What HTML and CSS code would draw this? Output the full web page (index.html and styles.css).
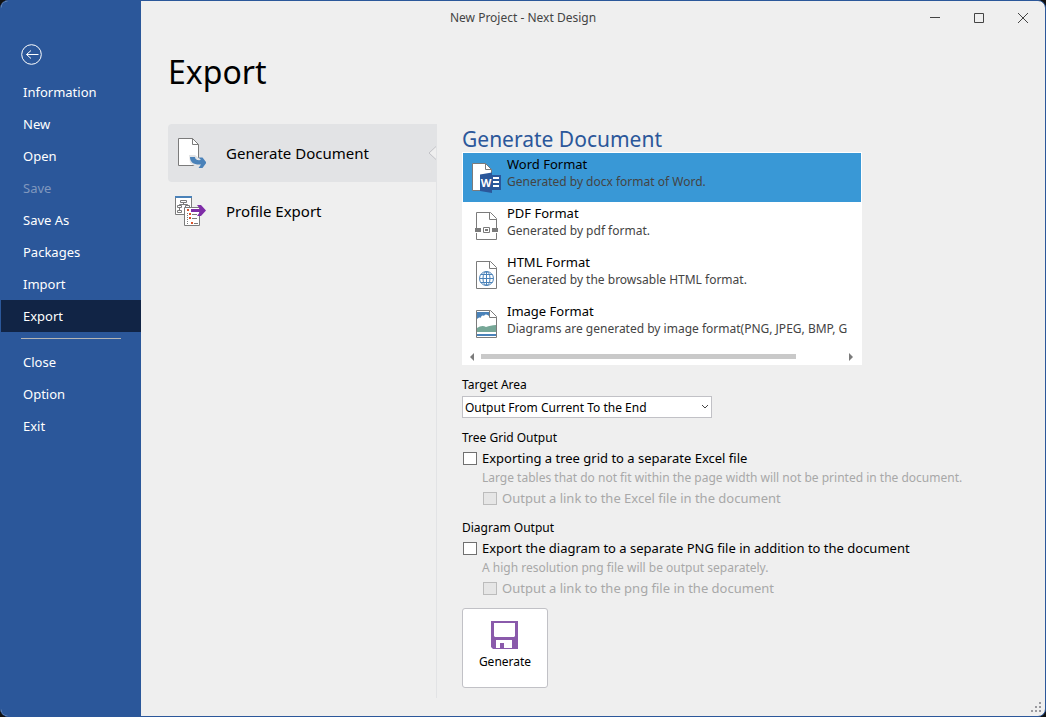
FILE: index.html
```html
<!DOCTYPE html>
<html lang="en">
<head>
    <meta charset="UTF-8">
    <meta name="viewport" content="width=device-width, initial-scale=1.0">
    <title>New Project - Next Design</title>
    <link rel="stylesheet" href="styles.css">
</head>
<body>
    <div class="window">
        <header class="titlebar">
            <span class="window-title">New Project - Next Design</span>
            <div class="window-buttons">
                <button type="button" aria-label="Minimize">
                    <svg width="12" height="12" viewBox="0 0 12 12"><path d="M1 5.5h10"/></svg>
                </button>
                <button type="button" aria-label="Maximize">
                    <svg width="12" height="12" viewBox="0 0 12 12"><path d="M1.5 1.5h9v9h-9z"/></svg>
                </button>
                <button type="button" aria-label="Close">
                    <svg width="12" height="12" viewBox="0 0 12 12"><path d="M1 1l10 10M11 1L1 11"/></svg>
                </button>
            </div>
        </header>

        <nav class="sidebar">
            <button class="back" type="button" aria-label="Back">
                <svg width="22" height="22" viewBox="0 0 22 22">
                    <circle cx="10.5" cy="10.5" r="9.8"/>
                    <path d="M5.5 10.5h12M10 6.5l-4.5 4 4.5 4"/>
                </svg>
            </button>
            <a href="#">Information</a>
            <a href="#">New</a>
            <a href="#">Open</a>
            <a class="disabled" href="#" aria-disabled="true">Save</a>
            <a href="#">Save As</a>
            <a href="#">Packages</a>
            <a href="#">Import</a>
            <a class="active" href="#">Export</a>
            <hr>
            <a href="#">Close</a>
            <a href="#">Option</a>
            <a href="#">Exit</a>
        </nav>

        <main class="page">
            <h1>Export</h1>
            <div class="columns">
                <div class="export-menu">
                    <button class="export-item selected" type="button">
                        <svg width="32" height="32" viewBox="0 0 32 32">
                            <path d="M4.5 1.5h14l6 6v21h-20z" fill="#fff" stroke="#7b7b7b"/>
                            <path d="M18.5 1.5v6h6" fill="none" stroke="#7b7b7b"/>
                            <path d="M15 18h6l5 4v8h-4l-6-4z" fill="#e2e3e5"/>
                            <path d="M16 20h5c0 2.500 2 3.500 6 3l-2.500-2.500h4l4 5-4 5.500h-4l2.500-3.500c-7 .5-11-2-11-7.500z" fill="#4a82b9"/>
                        </svg>
                        Generate Document
                        <svg class="pointer" width="8" height="14" viewBox="0 0 8 14"><path d="M8 .5L1 7l7 6.500"/></svg>
                    </button>
                    <button class="export-item" type="button">
                        <svg width="32" height="32" viewBox="0 0 32 32">
                            <path d="M1.500 1.500h16v18h-16z" fill="#fff" stroke="#7b7b7b"/>
                            <path d="M1 1h17v2H1z" fill="#4a82b9"/>
                            <path d="M6.500 5.500h6v2h-6zM3.500 10.500h4v2h-4zM11.500 10.500h4v2h-4zM3.500 15.500h4v2h-4zM9.500 7.500v2M5.500 10.500v-1h8v1M5.500 12.500v3" fill="none" stroke="#7b7b7b"/>
                            <path d="M10.500 12.500h15v18h-15z" fill="#fff" stroke="#7b7b7b"/>
                            <path d="M13 14h2v2h-2zM15 18h2v2h-2zM15 22h2v2h-2zM17 27h2v2h-2z" fill="#d9532c"/>
                            <path d="M18 19.500h5M18 23.500h5M20 28.500h4" stroke="#7b7b7b"/>
                            <path d="M13.500 18v11" stroke="#7b7b7b" stroke-dasharray="1 1"/>
                            <path d="M17 14h9l-3-4h4l5 5.500-5 5.500h-4l3-4h-9z" fill="#7f2da8"/>
                        </svg>
                        Profile Export
                    </button>
                </div>

                <section class="content">
                    <h2>Generate Document</h2>
                    <div class="format-box">
                        <ul class="formats" role="listbox" aria-label="Format">
                            <li class="selected" role="option" aria-selected="true">
                                <svg width="32" height="31" viewBox="0 0 32 31">
                                    <path d="M1.500 1.500h13l6 6v21h-19z" fill="#fff" stroke="#7b7b7b"/>
                                    <path d="M14.500 1.500v6h6" fill="none" stroke="#7b7b7b"/>
                                    <path d="M21 13h9v15h-9z" fill="#2b579a"/>
                                    <path d="M22 16h6M22 20h6M22 24h6" stroke="#fff" stroke-width="2"/>
                                    <path d="M9 12.500l12-2v20.500l-12-2z" fill="#2b579a"/>
                                    <text class="word-letter" x="15" y="25" text-anchor="middle">W</text>
                                </svg>
                                <div>
                                    <strong>Word Format</strong>
                                    <span>Generated by docx format of Word.</span>
                                </div>
                            </li>
                            <li role="option" aria-selected="false">
                                <svg width="32" height="31" viewBox="0 0 32 31">
                                    <path d="M5.500 17V1.500h14l6 6V17M5.500 22v6.500h20V22" fill="none" stroke="#7b7b7b"/>
                                    <path d="M18.500 1.500v7h7" fill="none" stroke="#7b7b7b"/>
                                    <path d="M4 17h6v4H4zM21 17h6v4h-6z" fill="#7b7b7b"/>
                                    <path d="M12.500 16.500h6v5h-6z" fill="none" stroke="#7b7b7b"/>
                                    <path d="M14 18h3v2h-3z" fill="#7b7b7b"/>
                                </svg>
                                <div>
                                    <strong>PDF Format</strong>
                                    <span>Generated by pdf format.</span>
                                </div>
                            </li>
                            <li role="option" aria-selected="false">
                                <svg width="32" height="31" viewBox="0 0 32 31">
                                    <path d="M5.500 1.500h14l6 6v21h-20z" fill="#fff" stroke="#7b7b7b"/>
                                    <path d="M18.500 1.500v7h7" fill="none" stroke="#7b7b7b"/>
                                    <g fill="none" stroke="#4a82b9">
                                        <circle cx="15.500" cy="18.500" r="7"/>
                                        <ellipse cx="15.500" cy="18.500" rx="3.500" ry="7"/>
                                        <path d="M15.500 11.500v14M8.500 18.500h14M9.500 14.500h12M9.500 22.500h12"/>
                                    </g>
                                </svg>
                                <div>
                                    <strong>HTML Format</strong>
                                    <span>Generated by the browsable HTML format.</span>
                                </div>
                            </li>
                            <li role="option" aria-selected="false">
                                <svg width="32" height="31" viewBox="0 0 32 31">
                                    <path d="M5.500 1.500h14l6 6v21h-20z" fill="#fff"/>
                                    <path d="M6 3h12v4c-2-2-4-2-5 0-2-1-3 0-3 2-1-1-3 0-4 1z" fill="#4a82b9"/>
                                    <path d="M6 19c3-2 6-3 9-1 3-1 6-2 10-2v7H6z" fill="#76a797"/>
                                    <path d="M6 25h19v2H6z" fill="#4a82b9"/>
                                    <path d="M5.500 1.500h14l6 6v21h-20z" fill="none" stroke="#7b7b7b"/>
                                    <path d="M18.500 1.500v7h7" fill="#fff" stroke="#7b7b7b"/>
                                </svg>
                                <div>
                                    <strong>Image Format</strong>
                                    <span>Diagrams are generated by image format(PNG, JPEG, BMP, G</span>
                                </div>
                            </li>
                        </ul>
                        <div class="scrollbar">
                            <svg width="5" height="8" viewBox="0 0 5 8"><path d="M4 0v8L0 4z"/></svg>
                            <div class="track"><div class="thumb"></div></div>
                            <svg width="5" height="8" viewBox="0 0 5 8"><path d="M0 0v8l4-4z"/></svg>
                        </div>
                    </div>

                    <div class="target">
                        <label for="target">Target Area</label>
                        <div class="select-box">
                            <select id="target">
                                <option>Output From Current To the End</option>
                            </select>
                            <svg width="8" height="6" viewBox="0 0 8 6"><path d="M1 1l3 3 3-3"/></svg>
                        </div>
                    </div>

                    <fieldset>
                        <legend>Tree Grid Output</legend>
                        <label class="check"><input type="checkbox">Exporting a tree grid to a separate Excel file</label>
                        <p>Large tables that do not fit within the page width will not be printed in the document.</p>
                        <label class="check nested"><input type="checkbox" disabled>Output a link to the Excel file in the document</label>
                    </fieldset>

                    <fieldset>
                        <legend>Diagram Output</legend>
                        <label class="check"><input type="checkbox">Export the diagram to a separate PNG file in addition to the document</label>
                        <p>A high resolution png file will be output separately.</p>
                        <label class="check nested"><input type="checkbox" disabled>Output a link to the png file in the document</label>
                    </fieldset>

                    <button class="generate" type="button">
                        <svg width="28" height="28" viewBox="0 0 28 28">
                            <path d="M0 0h27v28H2l-2-2z" fill="#8a5aab"/>
                            <path d="M3 2h21v13l-1 1H4l-1-1z" fill="#fff"/>
                            <path d="M5 19h16v8h-8v-5H9v5H5z" fill="#fff"/>
                        </svg>
                        Generate
                    </button>
                </section>
            </div>
        </main>

        <svg class="grip" width="10" height="10" viewBox="0 0 10 10">
            <path d="M8 0h2v2H8zM4 4h2v2H4zM8 4h2v2H8zM0 8h2v2H0zM4 8h2v2H4zM8 8h2v2H8z" fill="#9a9a9f"/>
        </svg>
    </div>
</body>
</html>
```
FILE: styles.css
```css
* {
    margin: 0;
    padding: 0;
    box-sizing: border-box;
}

body {
    background: #111;
    color: #000;
    font-family: "Noto Sans", sans-serif;
    font-size: 12px;
    line-height: 20px;
}

button,
select,
input {
    font: inherit;
    color: inherit;
}

button {
    background: none;
    border: none;
}

.window {
    position: relative;
    display: grid;
    grid-template-columns: 140px 1fr;
    grid-template-rows: 34px 1fr;
    min-height: 100vh;
    background: #efefef;
    border: 1px solid #2b579a;
    border-radius: 8px;
    overflow: hidden;
}

/* title bar */
.titlebar {
    grid-area: 1 / 1 / 2 / 3;
    z-index: 1;
    display: grid;
    grid-template-columns: 1fr auto 1fr;
    align-items: center;
}

.window-title {
    grid-column: 2;
    color: #444;
}

.window-buttons {
    display: flex;
    justify-content: flex-end;
}

.window-buttons button {
    display: flex;
    align-items: center;
    justify-content: center;
    width: 44px;
    height: 34px;
}

.window-buttons svg {
    fill: none;
    stroke: #444;
}

/* sidebar */
.sidebar {
    grid-area: 1 / 1 / 3 / 2;
    display: flex;
    flex-direction: column;
    padding-top: 43px;
    background: #2b579a;
}

.back {
    width: 22px;
    height: 22px;
    margin: 0 0 10px 20px;
}

.back svg {
    display: block;
    fill: none;
    stroke: #fff;
}

.sidebar a {
    padding-left: 22px;
    color: #fff;
    font-size: 13px;
    line-height: 32px;
    text-decoration: none;
}

.sidebar .disabled {
    color: #8097be;
}

.sidebar .active {
    background: #112445;
}

.sidebar hr {
    margin: 6px 20px 7px;
    border: none;
    border-top: 1px solid #b4b4b4;
}

/* page */
.page {
    grid-area: 2 / 2 / 3 / 3;
    display: flex;
    flex-direction: column;
    padding: 17px 27px 18px;
}

h1 {
    margin-bottom: 32px;
    font-size: 32px;
    font-weight: 400;
    line-height: 40px;
}

.columns {
    flex: 1;
    display: grid;
    grid-template-columns: 269px minmax(0, 1fr);
    column-gap: 25px;
}

.export-menu {
    border-right: 1px solid #e2e3e5;
}

.export-item {
    position: relative;
    display: flex;
    align-items: center;
    gap: 20px;
    width: 100%;
    height: 58px;
    padding-left: 6px;
    font-size: 15px;
    text-align: left;
}

.export-item.selected {
    background: #e2e3e5;
    border-radius: 4px 0 0 4px;
}

.pointer {
    position: absolute;
    top: 22px;
    right: 0;
    fill: #efefef;
    stroke: #c1c1c6;
}

h2 {
    padding-top: 2px;
    color: #2b579a;
    font-size: 21px;
    font-weight: 400;
    line-height: 26px;
}

.format-box {
    max-width: 400px;
    padding: 1px;
    background: #fff;
}

.formats {
    list-style: none;
    overflow: hidden;
}

.formats li {
    display: flex;
    align-items: center;
    gap: 4px;
    height: 49px;
    padding-left: 8px;
    white-space: nowrap;
}

.formats .selected {
    background: #3998d6;
}

.formats svg {
    flex: none;
}

.formats strong,
.formats span {
    display: block;
    line-height: 18px;
}

.formats strong {
    font-size: 13px;
    font-weight: 400;
}

.formats span {
    color: #444;
}

.formats div {
    padding-bottom: 9px;
}

.word-letter {
    fill: #fff;
    font-size: 11px;
    font-weight: 700;
}

.scrollbar {
    display: flex;
    align-items: center;
    gap: 6px;
    height: 15px;
    padding: 0 7px;
}

.scrollbar path {
    fill: #7b7b7b;
}

.track {
    flex: 1;
}

.thumb {
    width: 87%;
    height: 5px;
    background: #c9c9c9;
}

.target {
    margin-top: 9px;
    line-height: 22px;
}

.target label {
    display: block;
}

.select-box {
    position: relative;
    width: 250px;
}

.select-box select {
    display: block;
    width: 100%;
    height: 22px;
    padding: 0 2px;
    background: #fff;
    border: 1px solid #c1c1c6;
    border-radius: 0;
    appearance: none;
}

.select-box svg {
    position: absolute;
    top: 8px;
    right: 3px;
    fill: none;
    stroke: #444;
    pointer-events: none;
}

fieldset {
    margin-top: 10px;
    border: none;
}

legend {
    display: block;
}

.check {
    display: flex;
    align-items: center;
    gap: 5px;
    padding-left: 1px;
    font-size: 13px;
}

.check input {
    width: 14px;
    height: 13px;
    background: #fff;
    border: 1px solid #707070;
    appearance: none;
}

.check input:disabled {
    background: #e6e6e6;
    border-color: #bcbcbc;
}

.nested,
fieldset p {
    margin-left: 20px;
    color: #a8a8a8;
}

.generate {
    display: flex;
    flex-direction: column;
    align-items: center;
    gap: 3px;
    width: 86px;
    height: 80px;
    margin-top: 10px;
    padding-top: 12px;
    background: #fff;
    border: 1px solid #c1c1c6;
    border-radius: 3px;
}

.grip {
    position: absolute;
    right: 4px;
    bottom: 4px;
}
```
